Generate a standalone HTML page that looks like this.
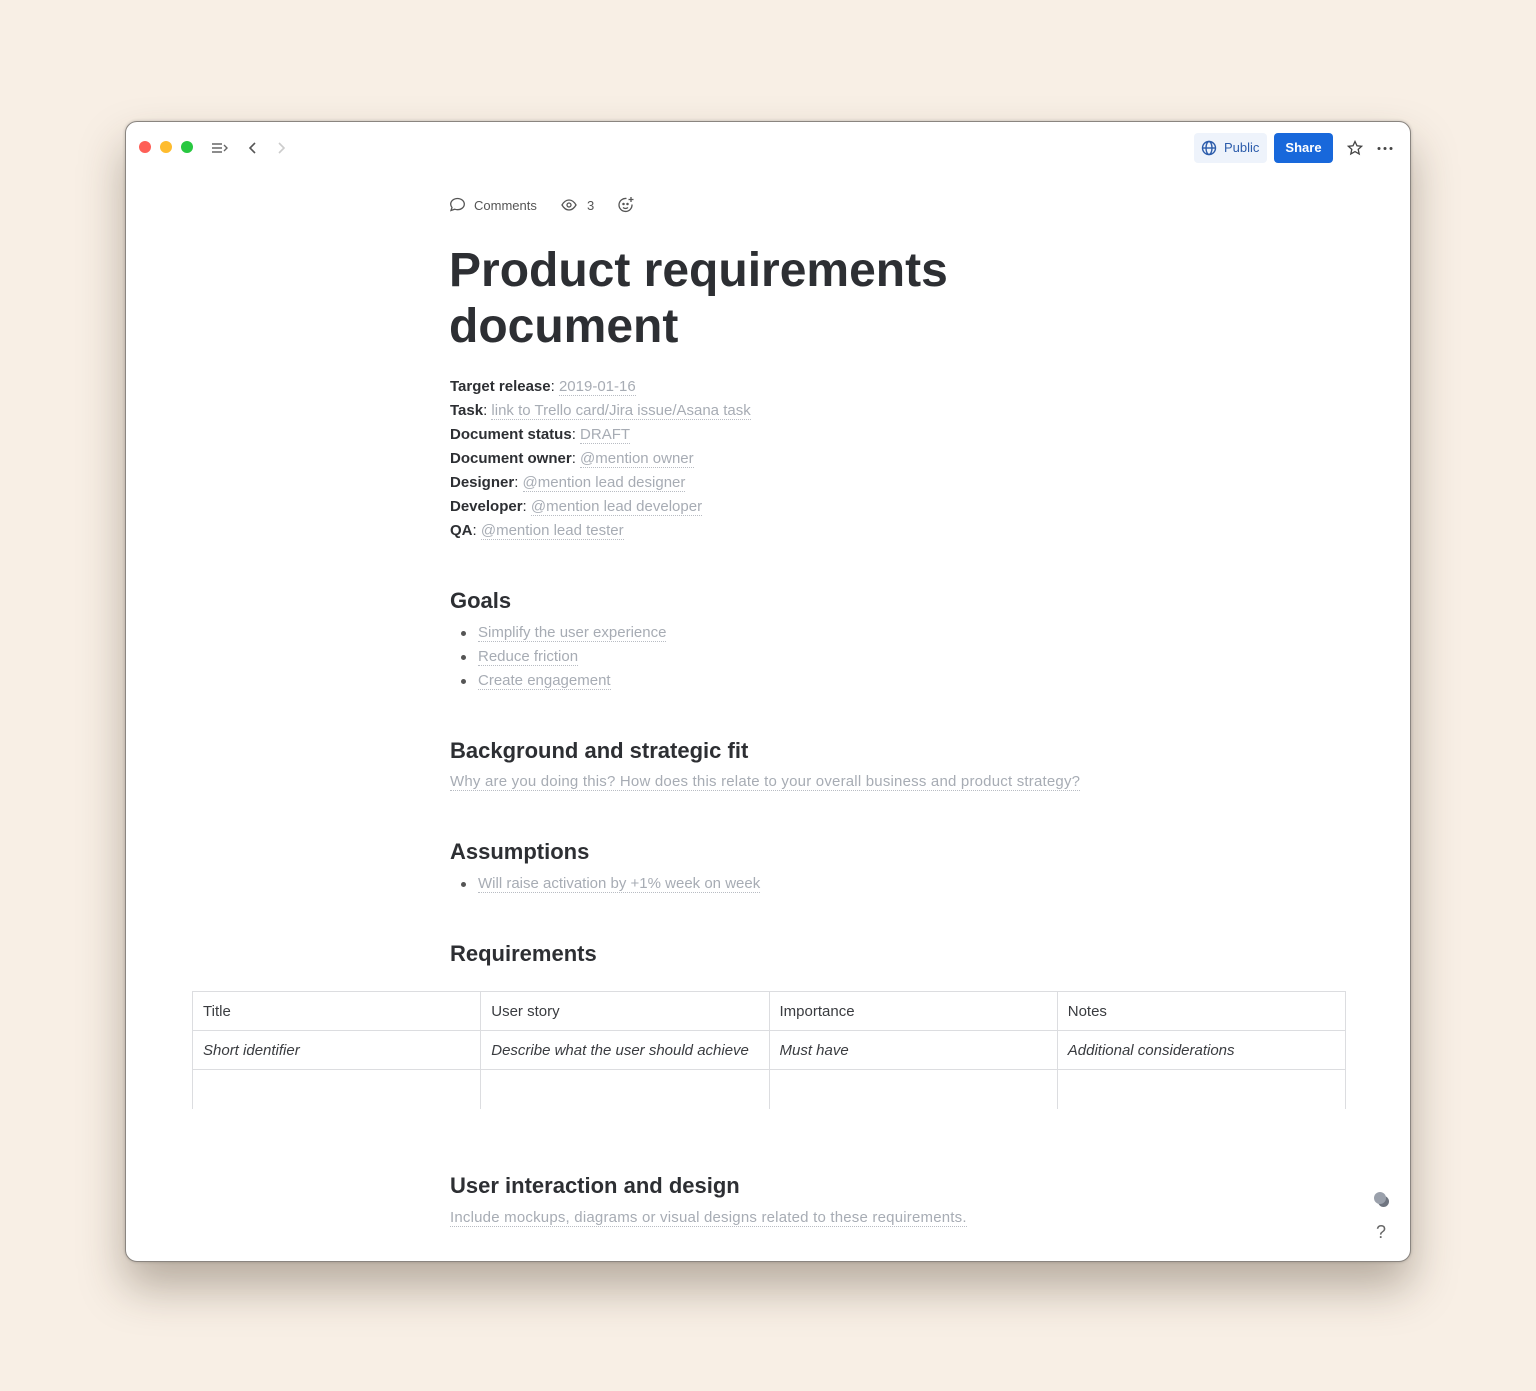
<!DOCTYPE html>
<html><head><meta charset="utf-8"><style>
*{box-sizing:border-box;margin:0;padding:0}
body{width:1536px;height:1391px;background:#f8efe5;font-family:"Liberation Sans",sans-serif;position:relative;overflow:hidden;color:#2d2f33}
.win{position:absolute;left:125px;top:121px;width:1286px;height:1141px;background:#fff;border-radius:12px;border:1px solid #8a8580;box-shadow:0 25px 45px rgba(60,45,30,.35),0 0 3px rgba(0,0,0,.2);overflow:hidden}
.dot{position:absolute;top:19px;width:12px;height:12px;border-radius:50%}
.abs{position:absolute}
.meta{font-size:15px;line-height:24px;position:absolute;left:324px;top:253px}
.meta b{color:#2d2f33}
.ph{color:#a7acb4;border-bottom:1px dotted #b8bcc3}
h2{position:absolute;left:324px;font-size:22px;font-weight:bold;color:#2d2f33}
ul{position:absolute;left:352px;font-size:15px;line-height:24px;list-style:none}
ul li{position:relative}
ul li:before{content:"";position:absolute;left:-17px;top:10px;width:5px;height:5px;border-radius:50%;background:#555}
table{position:absolute;left:66px;top:869px;width:1154px;border-collapse:collapse;font-size:15px;color:#3a3c40}
td{border:1px solid #dcdde0;height:39px;padding:0 10px;width:25%}
tr:last-child td{border-bottom:none}
</style></head><body>
<div class="win">
<div class="dot" style="left:13px;background:#fe5f57"></div>
<div class="dot" style="left:34px;background:#febc2e"></div>
<div class="dot" style="left:55px;background:#28c840"></div>
<svg class="abs" style="left:85px;top:19px" width="18" height="14" viewBox="0 0 18 14" fill="none" stroke="#666" stroke-width="1.4"><path d="M1 3h10M1 7h10M1 11h10M13 4l3 3-3 3"/></svg>
<svg class="abs" style="left:122px;top:19px" width="10" height="14" viewBox="0 0 10 14" fill="none" stroke="#555" stroke-width="1.6"><path d="M7 2L2 7l5 5"/></svg>
<svg class="abs" style="left:150px;top:19px" width="10" height="14" viewBox="0 0 10 14" fill="none" stroke="#ccc" stroke-width="1.6"><path d="M3 2l5 5-5 5"/></svg>
<div class="abs" style="left:1068px;top:11px;width:73px;height:30px;background:#eef3fb;border-radius:4px;font-size:13px;color:#2c5cab;line-height:30px;padding-left:30px">Public</div>
<svg class="abs" style="left:1075px;top:18px" width="16" height="16" viewBox="0 0 16 16" fill="none" stroke="#2c5cab" stroke-width="1.4"><circle cx="8" cy="8" r="6.5"/><ellipse cx="8" cy="8" rx="3" ry="6.5"/><path d="M1.5 8h13"/></svg>
<div class="abs" style="left:1148px;top:11px;width:59px;height:30px;background:#1868db;border-radius:4px;font-size:13px;font-weight:bold;color:#fff;line-height:30px;text-align:center">Share</div>
<svg class="abs" style="left:1221px;top:18px" width="16" height="16" viewBox="0 0 16 16" fill="none" stroke="#444" stroke-width="1.3"><path d="M8 1.5l2 4.3 4.6.5-3.4 3.1 1 4.6L8 11.6 3.8 14l1-4.6L1.4 6.3 6 5.8z"/></svg>
<svg class="abs" style="left:1251px;top:24px" width="16" height="5" viewBox="0 0 16 5" fill="#444"><circle cx="2" cy="2.5" r="1.5"/><circle cx="8" cy="2.5" r="1.5"/><circle cx="14" cy="2.5" r="1.5"/></svg>
<svg class="abs" style="left:323px;top:75px" width="17" height="16" viewBox="0 0 17 16" fill="none" stroke="#555" stroke-width="1.3"><path d="M8.5 1.5c3.8 0 6.8 2.5 6.8 5.6s-3 5.6-6.8 5.6c-1 0-2-.2-2.8-.5L2 13.5l1-3C2.1 9.5 1.7 8.4 1.7 7.1 1.7 4 4.7 1.5 8.5 1.5z"/></svg>
<div class="abs" style="left:348px;top:76px;font-size:13px;color:#555">Comments</div>
<svg class="abs" style="left:435px;top:77px" width="16" height="12" viewBox="0 0 16 12" fill="none" stroke="#555" stroke-width="1.3"><path d="M1 6c2-3.5 4.5-5 7-5s5 1.5 7 5c-2 3.5-4.5 5-7 5S3 9.5 1 6z"/><circle cx="8" cy="6" r="2"/></svg>
<div class="abs" style="left:461px;top:76px;font-size:13px;color:#555">3</div>
<svg class="abs" style="left:491px;top:74px" width="18" height="18" viewBox="0 0 18 18" fill="none" stroke="#555" stroke-width="1.3"><path d="M15 8.5A6.5 6.5 0 1 1 9.5 2.5"/><path d="M14 1v5M11.5 3.5h5"/><circle cx="6.5" cy="8" r=".6" fill="#555"/><circle cx="10.5" cy="8" r=".6" fill="#555"/><path d="M6 11.5c1.5 1.2 3.5 1.2 5 0"/></svg>
<div class="abs" style="left:323px;top:121px;font-size:48px;font-weight:bold;line-height:56px;letter-spacing:0px;color:#2d2f33">Product requirements<br>document</div>
<div class="meta">
<b>Target release</b>: <span class="ph">2019-01-16</span><br>
<b>Task</b>: <span class="ph">link to Trello card/Jira issue/Asana task</span><br>
<b>Document status</b>: <span class="ph">DRAFT</span><br>
<b>Document owner</b>: <span class="ph">@mention owner</span><br>
<b>Designer</b>: <span class="ph">@mention lead designer</span><br>
<b>Developer</b>: <span class="ph">@mention lead developer</span><br>
<b>QA</b>: <span class="ph">@mention lead tester</span>
</div>
<h2 style="top:466px">Goals</h2>
<ul style="top:499px"><li><span class="ph">Simplify the user experience</span></li><li><span class="ph">Reduce friction</span></li><li><span class="ph">Create engagement</span></li></ul>
<h2 style="top:616px">Background and strategic fit</h2>
<div class="abs" style="left:324px;top:651px;font-size:15px;letter-spacing:0.2px"><span class="ph">Why are you doing this? How does this relate to your overall business and product strategy?</span></div>
<h2 style="top:717px">Assumptions</h2>
<ul style="top:750px"><li><span class="ph">Will raise activation by +1% week on week</span></li></ul>
<h2 style="top:819px">Requirements</h2>
<table>
<tr><td>Title</td><td>User story</td><td>Importance</td><td>Notes</td></tr>
<tr style="font-style:italic"><td>Short identifier</td><td>Describe what the user should achieve</td><td>Must have</td><td>Additional considerations</td></tr>
<tr><td></td><td></td><td></td><td></td></tr>
</table>
<h2 style="top:1051px">User interaction and design</h2>
<div class="abs" style="left:324px;top:1087px;font-size:15px;letter-spacing:0.2px"><span class="ph">Include mockups, diagrams or visual designs related to these requirements.</span></div>
<div class="abs" style="left:1252px;top:1074px;width:11px;height:11px;border-radius:50%;background:#6f7580"></div>
<div class="abs" style="left:1248px;top:1070px;width:12px;height:12px;border-radius:50%;background:#9aa0ab"></div>
<div class="abs" style="left:1250px;top:1100px;font-size:18px;color:#666">?</div>
</div>
</body></html>
